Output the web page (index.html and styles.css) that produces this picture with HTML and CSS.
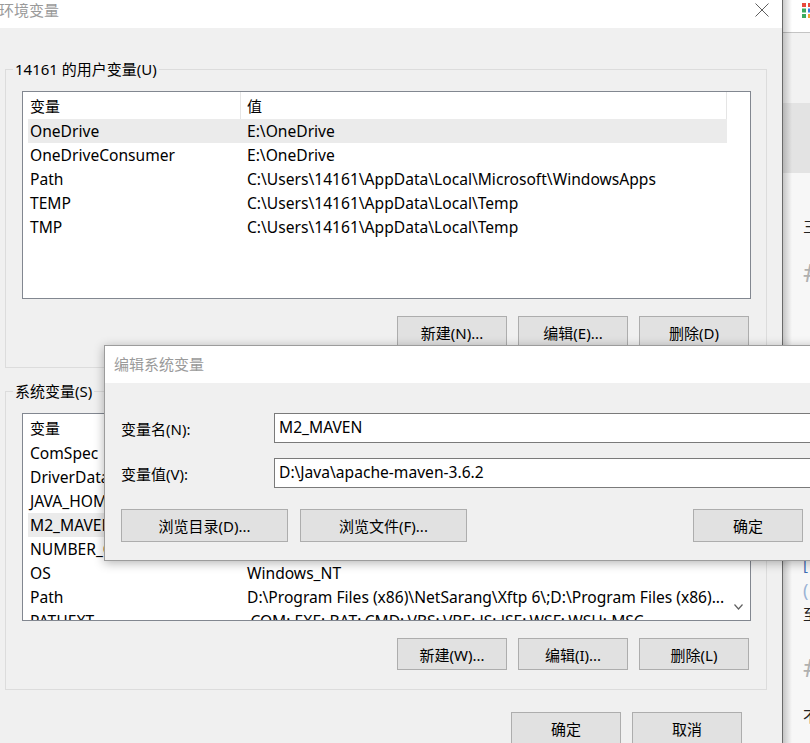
FILE: index.html
```html
<!DOCTYPE html>
<html lang="zh-CN">
  <head>
    <meta charset="UTF-8" />
    <title>环境变量</title>
    <link rel="stylesheet" href="styles.css">
  </head>
  <body>
    <div class="screen">
      <div class="env">
        <div class="env-title">
          <span class="title-text">环境变量</span>
          <svg class="close" width="14" height="14" viewBox="0 0 14 14">
            <path d="M0.5 0.5 L13.5 13.5 M13.5 0.5 L0.5 13.5" stroke="#5f5f5f" stroke-width="1" fill="none" />
          </svg>
        </div>
        <div class="env-body">
          <fieldset class="group">
            <legend>14161 的用户变量(U)</legend>
            <div class="group-body">
              <div class="list">
                <div class="list-head">
                  <div class="c1">变量</div>
                  <div class="c2">值</div>
                </div>
                <div class="row sel"><div class="c1">OneDrive</div><div class="c2">E:\OneDrive</div></div>
                <div class="row"><div class="c1">OneDriveConsumer</div><div class="c2">E:\OneDrive</div></div>
                <div class="row"><div class="c1">Path</div><div class="c2">C:\Users\14161\AppData\Local\Microsoft\WindowsApps</div></div>
                <div class="row"><div class="c1">TEMP</div><div class="c2">C:\Users\14161\AppData\Local\Temp</div></div>
                <div class="row"><div class="c1">TMP</div><div class="c2">C:\Users\14161\AppData\Local\Temp</div></div>
              </div>
              <div class="btn-row">
                <button>新建(N)...</button>
                <button>编辑(E)...</button>
                <button>删除(D)</button>
              </div>
            </div>
          </fieldset>

          <fieldset class="group sys">
            <legend>系统变量(S)</legend>
            <div class="group-body">
              <div class="list">
                <div class="list-head">
                  <div class="c1">变量</div>
                  <div class="c2">值</div>
                </div>
                <div class="row"><div class="c1">ComSpec</div><div class="c2">C:\WINDOWS\system32\cmd.exe</div></div>
                <div class="row"><div class="c1">DriverData</div><div class="c2">C:\Windows\System32\Drivers\DriverData</div></div>
                <div class="row"><div class="c1">JAVA_HOME</div><div class="c2">D:\Java\jdk1.8.0_201</div></div>
                <div class="row sel"><div class="c1">M2_MAVEN</div><div class="c2">D:\Java\apache-maven-3.6.2</div></div>
                <div class="row"><div class="c1">NUMBER_OF_PROCESSORS</div><div class="c2">8</div></div>
                <div class="row"><div class="c1">OS</div><div class="c2">Windows_NT</div></div>
                <div class="row"><div class="c1">Path</div><div class="c2">D:\Program Files (x86)\NetSarang\Xftp 6\;D:\Program Files (x86)...</div></div>
                <div class="row"><div class="c1">PATHEXT</div><div class="c2">.COM;.EXE;.BAT;.CMD;.VBS;.VBE;.JS;.JSE;.WSF;.WSH;.MSC</div></div>
                <svg class="scroll-down" width="9" height="6" viewBox="0 0 9 6">
                  <path d="M0.5 0.5 L4.5 5 L8.5 0.5" stroke="#606060" stroke-width="1.2" fill="none" />
                </svg>
              </div>
              <div class="btn-row">
                <button>新建(W)...</button>
                <button>编辑(I)...</button>
                <button>删除(L)</button>
              </div>
            </div>
          </fieldset>

          <div class="btn-row bottom">
            <button>确定</button>
            <button>取消</button>
          </div>
        </div>
      </div>

      <div class="strip">
        <div class="strip-top">
          <svg class="apps" width="8" height="16" viewBox="0 0 8 16">
            <rect x="0" y="1" width="4" height="4" fill="#e84a3c" />
            <rect x="6" y="1" width="4" height="4" fill="#e84a3c" />
            <rect x="0" y="6.5" width="4" height="4" fill="#3bab5f" />
            <rect x="6" y="6.5" width="4" height="4" fill="#3a7be0" />
            <rect x="0" y="12" width="4" height="4" fill="#3bab5f" />
            <rect x="6" y="12" width="4" height="4" fill="#f0a030" />
          </svg>
        </div>
        <div class="strip-band"></div>
        <div class="strip-band dark"></div>
        <div class="frag gap" style="height: 42px"></div>
        <div class="frag" style="height: 20px">三</div>
        <div class="frag hash" style="height: 74px">#</div>
        <div class="frag gap" style="height: 245px"></div>
        <div class="frag link" style="height: 20px">[</div>
        <div class="frag paren" style="height: 32px">(</div>
        <div class="frag" style="height: 14px">至</div>
        <div class="frag gap" style="height: 20px"></div>
        <div class="frag hash" style="height: 54px">#</div>
        <div class="frag gap" style="height: 11px"></div>
        <div class="frag" style="height: 20px">不</div>
      </div>

      <div class="edit">
        <div class="edit-title">编辑系统变量</div>
        <div class="edit-body">
          <div class="field">
            <label>变量名(N):</label>
            <div class="input">M2_MAVEN</div>
          </div>
          <div class="field">
            <label>变量值(V):</label>
            <div class="input">D:\Java\apache-maven-3.6.2</div>
          </div>
          <div class="edit-buttons">
            <button class="wide">浏览目录(D)...</button>
            <button class="wide">浏览文件(F)...</button>
            <button class="ok">确定</button>
            <button>取消</button>
          </div>
        </div>
      </div>
    </div>
  </body>
</html>
```

FILE: styles.css
```css
* {
  margin: 0;
  padding: 0;
  box-sizing: border-box;
}

body {
  font-family: "Noto Sans", "Noto Sans CJK SC", sans-serif;
  font-size: 15px;
  color: #000;
  background: #f0f0f0;
}

.screen {
  position: relative;
  display: flex;
  width: 810px;
  height: 743px;
  overflow: hidden;
}

/* main window */
.env {
  flex: none;
  width: 783px;
  height: 743px;
  background: #f0f0f0;
  border-right: 1px solid #6a6a6a;
}

.env-title {
  height: 28px;
  background: #fff;
  display: flex;
  justify-content: space-between;
  align-items: flex-start;
}

.title-text {
  color: #9a9a9a;
  line-height: 20px;
  margin-left: -1px;
}

.close {
  margin-top: 3px;
  margin-right: 13px;
}

.env-body {
  padding: 31px 15px 0 5px;
}

.group {
  border: 1px solid #dcdcdc;
  min-width: 0;
}

.group legend {
  margin-left: 7px;
  padding: 0 2px;
  line-height: 20px;
}

.group.sys {
  margin-top: 13px;
}

.group-body {
  padding: 12px 15px 19px 16px;
}

.list {
  position: relative;
  height: 208px;
  background: #fff;
  border: 1px solid #828790;
  padding-left: 5px;
  overflow: hidden;
}

.list-head,
.row {
  display: flex;
  width: 699px;
  white-space: nowrap;
}

.list-head {
  height: 27px;
  line-height: 28px;
}

.row {
  height: 24px;
  line-height: 24px;
  font-size: 15.6px;
}

.row.sel {
  background: #ebebeb;
}

.c1 {
  width: 213px;
  padding-left: 2px;
  border-right: 1px solid transparent;
  overflow: hidden;
}

.c2 {
  width: 486px;
  padding-left: 6px;
  border-right: 1px solid transparent;
  overflow: hidden;
}

.list-head .c1,
.list-head .c2 {
  border-right-color: #e5e5e5;
}

.scroll-down {
  position: absolute;
  right: 7px;
  bottom: 10px;
}

.btn-row {
  display: flex;
  justify-content: flex-end;
  gap: 11px;
  margin-top: 17px;
  padding-right: 2px;
}

.btn-row.bottom {
  margin-top: 22px;
  padding-right: 25px;
}

button {
  font-family: inherit;
  font-size: 15px;
  color: #000;
  width: 110px;
  height: 32px;
  background: #e1e1e1;
  border: 1px solid #adadad;
}

/* right edge of the window behind */
.strip {
  flex: 1;
  position: relative;
  background: #f7f7f7;
  display: flex;
  flex-direction: column;
  overflow: hidden;
}

.strip::before {
  content: "";
  position: absolute;
  left: 0;
  top: 0;
  bottom: 0;
  width: 9px;
  background: linear-gradient(to right, rgba(0, 0, 0, 0.2), rgba(0, 0, 0, 0));
}

.strip-top {
  flex: none;
  height: 33px;
  background: #fff;
  border-bottom: 1px solid #c4c4c4;
}

.apps {
  display: block;
  margin: 2px 0 0 19px;
}

.strip-band {
  flex: none;
  height: 70px;
  background: #f2f2f2;
}

.strip-band.dark {
  background: #e3e3e3;
}

.frag {
  flex: none;
  padding-left: 20px;
  font-size: 15px;
  display: flex;
  align-items: center;
  white-space: nowrap;
  color: #222;
}

.frag.hash {
  font-size: 26px;
  color: #b0b0b0;
}

.frag.link {
  color: #3a6db5;
}

.frag.paren {
  color: #9ab3d5;
  font-size: 18px;
}

/* edit dialog on top */
.edit {
  position: absolute;
  left: 104px;
  top: 345px;
  width: 838px;
  height: 216px;
  background: #f0f0f0;
  border: 1px solid #9c9c9c;
  box-shadow: 0 2px 10px rgba(0, 0, 0, 0.3);
}

.edit-title {
  height: 37px;
  line-height: 37px;
  background: #fff;
  color: #9a9a9a;
  padding-left: 9px;
}

.edit-body {
  padding: 30px 16px 0 16px;
}

.field {
  display: flex;
  align-items: center;
}

.field + .field {
  margin-top: 15px;
}

.field label {
  width: 153px;
}

.input {
  flex: 1;
  height: 30px;
  line-height: 27px;
  font-size: 15.6px;
  background: #fff;
  border: 1px solid #7a7a7a;
  padding-left: 4px;
  white-space: nowrap;
}

.edit-buttons {
  display: flex;
  gap: 12px;
  margin-top: 21px;
}

.edit-buttons button {
  height: 33px;
}

.edit-buttons .wide {
  width: 167px;
}

.edit-buttons .ok {
  margin-left: auto;
}
```
